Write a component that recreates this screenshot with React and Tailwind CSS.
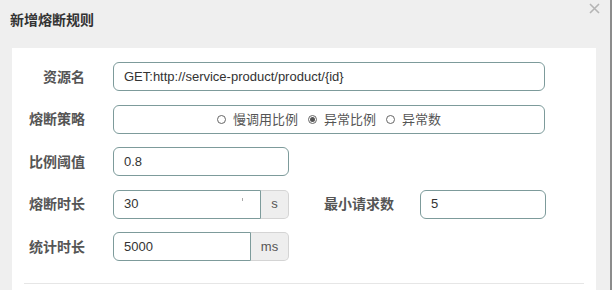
import React from "react";

const cjk = { fontFamily: '"Liberation Sans", "Noto Sans CJK SC", sans-serif' };

function Label({ children, className = "" }) {
  return (
    <div
      className={"text-[14px] font-bold text-[#555] leading-none whitespace-nowrap " + className}
      style={cjk}
    >
      {children}
    </div>
  );
}

function Radio({ checked, label }) {
  return (
    <div className="flex items-center">
      <span className="relative w-[9px] h-[9px] rounded-full border border-[#666] bg-white mr-[7px] flex items-center justify-center">
        {checked && <span className="w-[5px] h-[5px] rounded-full bg-[#555]" />}
      </span>
      <span className="text-[13px] text-[#555] leading-none" style={cjk}>
        {label}
      </span>
    </div>
  );
}

export default function App() {
  return (
    <div
      className="relative w-[612px] h-[290px] bg-[#efefef] flex flex-col overflow-hidden border-r-2 border-[#8c8c8c]"
      style={cjk}
    >
      <div className="h-[48px] flex items-start pl-[10px] pt-[12px] shrink-0">
        <div className="text-[14px] font-bold text-[#333] leading-[16px]">新增熔断规则</div>
      </div>
      <div className="absolute top-[3px] left-[589px] text-[#b3b3b3] text-[16px] leading-none">
        <svg width="11" height="11" viewBox="0 0 11 11">
          <path d="M1 1 L10 10 M10 1 L1 10" stroke="#b5b5b5" strokeWidth="1.6" fill="none" />
        </svg>
      </div>

      <div className="ml-[12px] w-[584px] flex-1 bg-white pt-[14px] flex flex-col">
        <div className="flex flex-col gap-[13.5px]">
          {/* Row 1 */}
          <div className="flex items-center h-[29px]">
            <div className="w-[73px] flex justify-end">
              <Label>资源名</Label>
            </div>
            <div className="ml-[28px] w-[432px] h-[29px] border border-[#7d9b9b] rounded-[6px] flex items-center pl-[10px] text-[13px] text-[#333]">
              GET:http://service-product/product/{"{id}"}
            </div>
          </div>
          {/* Row 2 */}
          <div className="flex items-center h-[29px]">
            <div className="w-[73px] flex justify-end">
              <Label>熔断策略</Label>
            </div>
            <div className="ml-[28px] w-[432px] h-[29px] border border-[#7d9b9b] rounded-[6px] flex items-center justify-center gap-[10px]">
              <Radio label="慢调用比例" />
              <Radio checked label="异常比例" />
              <Radio label="异常数" />
            </div>
          </div>
          {/* Row 3 */}
          <div className="flex items-center h-[29px]">
            <div className="w-[73px] flex justify-end">
              <Label>比例阈值</Label>
            </div>
            <div className="ml-[28px] w-[176px] h-[29px] border border-[#7d9b9b] rounded-[6px] flex items-center pl-[10px] text-[13px] text-[#333]">
              0.8
            </div>
          </div>
          {/* Row 4 */}
          <div className="flex items-center h-[29px]">
            <div className="w-[73px] flex justify-end">
              <Label>熔断时长</Label>
            </div>
            <div className="ml-[28px] flex h-[29px]">
              <div className="relative w-[148px] h-[29px] border border-[#7d9b9b] rounded-l-[6px] flex items-center pl-[10px] text-[13px] text-[#333]">
                30
                <span className="absolute right-[17px] top-[7px] w-[1px] h-[3px] bg-[#aaa]" />
              </div>
              <div className="w-[28px] h-[29px] bg-[#eeeeee] border border-l-0 border-[#d4d4d4] rounded-r-[5px] flex items-center justify-center text-[13px] text-[#555]">
                s
              </div>
            </div>
            <Label className="ml-[35px]">最小请求数</Label>
            <div className="ml-[26px] w-[126px] h-[29px] border border-[#7d9b9b] rounded-[6px] flex items-center pl-[10px] text-[13px] text-[#333]">
              5
            </div>
          </div>
          {/* Row 5 */}
          <div className="flex items-center h-[29px]">
            <div className="w-[73px] flex justify-end">
              <Label>统计时长</Label>
            </div>
            <div className="ml-[28px] flex h-[29px]">
              <div className="w-[138px] h-[29px] border border-[#7d9b9b] rounded-l-[6px] flex items-center pl-[10px] text-[13px] text-[#333]">
                5000
              </div>
              <div className="w-[38px] h-[29px] bg-[#eeeeee] border border-l-0 border-[#d4d4d4] rounded-r-[5px] flex items-center justify-center text-[13px] text-[#555]">
                ms
              </div>
            </div>
          </div>
        </div>
        <div className="mt-[22px] mx-[12px] h-[1px] bg-[#e6e6e6]" />
      </div>
    </div>
  );
}
